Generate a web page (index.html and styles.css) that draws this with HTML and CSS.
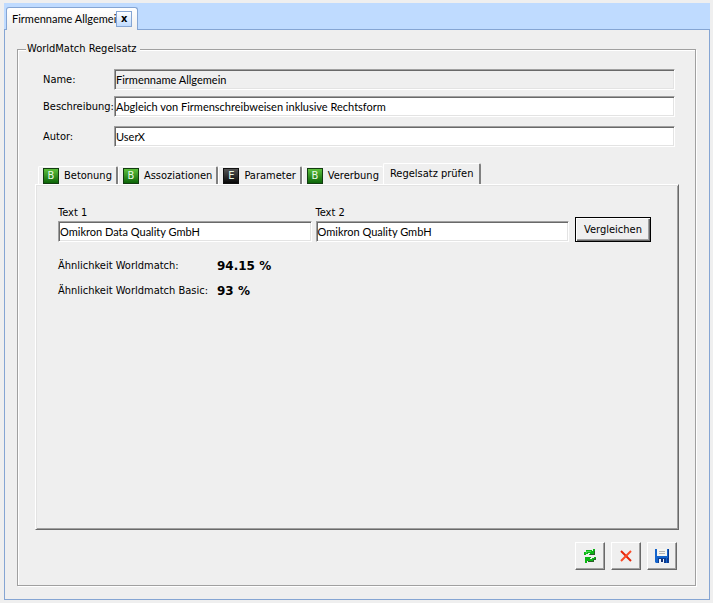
FILE: index.html
```html
<!DOCTYPE html>
<html lang="de">
<head>
    <meta charset="UTF-8">
    <meta name="viewport" content="width=device-width, initial-scale=1.0">
    <title>WorldMatch Regelsatz</title>
    <link rel="stylesheet" href="styles.css">
</head>
<body>
    <div class="window">
        <div class="editor-tabs">
            <div class="editor-tab">
                <span class="editor-title">Firmenname Allgemei</span>
                <button class="close" type="button">x</button>
            </div>
        </div>
        <form class="editor">
            <fieldset class="group">
                <legend>WorldMatch Regelsatz</legend>
                <div class="fields">
                    <label for="name">Name:</label>
                    <input class="field readonly" type="text" id="name" value="Firmenname Allgemein" readonly>
                    <label for="beschreibung">Beschreibung:</label>
                    <input class="field" type="text" id="beschreibung" value="Abgleich von Firmenschreibweisen inklusive Rechtsform">
                    <label class="spaced" for="autor">Autor:</label>
                    <input class="field spaced" type="text" id="autor" value="UserX">
                </div>

                <div class="tabs" role="tablist">
                    <button class="tab" type="button" role="tab"><span class="badge">B</span>Betonung</button>
                    <button class="tab" type="button" role="tab"><span class="badge">B</span>Assoziationen</button>
                    <button class="tab" type="button" role="tab"><span class="badge dark">E</span>Parameter</button>
                    <button class="tab last" type="button" role="tab"><span class="badge">B</span>Vererbung</button>
                    <button class="tab active" type="button" role="tab" aria-selected="true">Regelsatz prüfen</button>
                </div>
                <div class="panel" role="tabpanel">
                    <div class="compare">
                        <div class="text">
                            <label for="text1">Text 1</label>
                            <input class="field" type="text" id="text1" value="Omikron Data Quality GmbH">
                        </div>
                        <div class="text">
                            <label for="text2">Text 2</label>
                            <input class="field" type="text" id="text2" value="Omikron Quality GmbH">
                        </div>
                        <button class="compare-btn" type="button">Vergleichen</button>
                    </div>
                    <dl class="results">
                        <dt>Ähnlichkeit Worldmatch:</dt>
                        <dd>94.15 %</dd>
                        <dt>Ähnlichkeit Worldmatch Basic:</dt>
                        <dd>93 %</dd>
                    </dl>
                </div>

                <div class="actions">
                    <button class="icon-btn" type="button" aria-label="Aktualisieren">
                        <svg width="16" height="16" viewBox="0 0 16 16">
                            <path d="M2 6V4h2V2h6v1h1V1h2v6H7V6h1V5H6v1H4v1H2z" fill="#0cb414"/>
                            <path d="M3.500 5h1V3.500H9" fill="none" stroke="#4ade50"/>
                            <path d="M14 10v2h-2v2H6v-1H5v2H3V9h6v1H8v1h2v-1h2V9h2z" fill="#0cb414"/>
                            <path d="M13.500 10v1.500h-2v2H6M12.500 3v3.500H8" fill="none" stroke="#2c5a2c"/>
                        </svg>
                    </button>
                    <button class="icon-btn" type="button" aria-label="Verwerfen">
                        <svg width="16" height="16" viewBox="0 0 16 16">
                            <path d="M3 3l10 10" stroke="#e62408" stroke-width="2"/>
                            <path d="M13 3L3 13" stroke="#fa4a26" stroke-width="2"/>
                        </svg>
                    </button>
                    <button class="icon-btn" type="button" aria-label="Speichern">
                        <svg width="16" height="16" viewBox="0 0 16 16">
                            <path d="M1 1h14v14H2l-1-1z" fill="#1464cc"/>
                            <path d="M14 1h1v14h-2v-5h1z" fill="#0a3c94"/>
                            <path d="M3 1h10v7H3z" fill="#f6f6f2"/>
                            <path d="M5 3.500h6M5 5.500h6" stroke="#b4b4b4"/>
                            <path d="M4 10h8v5H4z" fill="#0c3c90"/>
                            <path d="M5 11h5v4H5z" fill="#f0f4fa"/>
                            <path d="M7 11h2v3H7z" fill="#102c70"/>
                        </svg>
                    </button>
                </div>
            </fieldset>
        </form>
    </div>
</body>
</html>
```
FILE: styles.css
```css
* {
    box-sizing: border-box;
}
body {
    margin: 0;
    padding: 3px 3px 3px 4px;
    min-height: 100vh;
    display: flex;
    background-color: #efefef;
    color: #000;
    font-family: Tahoma, "DejaVu Sans Condensed", "DejaVu Sans", sans-serif;
    font-size: 11px;
    line-height: 14px;
}
button, input {
    font: inherit;
    color: inherit;
    border-radius: 0;
    margin: 0;
}
.window {
    flex: 1;
    display: flex;
    flex-direction: column;
}
.editor-tabs {
    height: 27px;
    display: flex;
    align-items: flex-end;
    background-color: #bfdbff;
    border-bottom: 1px solid #85a5d3;
}
.editor-tab {
    display: flex;
    align-items: center;
    height: 23px;
    margin: 0 0 -1px 2px;
    padding: 0 5px;
    background: linear-gradient(#fff, #efefef);
    border: 1px solid #85a5d3;
    border-bottom: none;
    border-radius: 3px 3px 0 0;
}
.editor-title, .field {
    font-family: Tahoma, Lato, sans-serif;
}
.editor-title {
    white-space: nowrap;
}
.close {
    flex: none;
    width: 16px;
    height: 16px;
    padding: 0;
    border: 1px solid #85a5d3;
    background: linear-gradient(#fff, #bfdbff);
    font-weight: bold;
    line-height: 12px;
}
.editor {
    flex: 1;
    display: flex;
    padding: 12px 13px 13px 12px;
    border: 1px solid #85a5d3;
    border-top: none;
}
.group {
    flex: 1;
    min-width: 0;
    display: flex;
    flex-direction: column;
    margin: 0;
    padding: 13px 16px 15px 17px;
    border: 1px solid #a0a0a0;
    box-shadow: 1px 1px #fff, inset 1px 1px #fff;
}
legend {
    margin-left: -9px;
    padding: 0 3px 0 1px;
    background-color: #efefef;
}
.fields {
    display: grid;
    grid-template-columns: 71px 1fr;
    row-gap: 6px;
    align-items: center;
    padding: 0 4px 0 8px;
}
.fields label {
    white-space: nowrap;
}
.spaced {
    margin-top: 3px;
}
.field {
    min-width: 0;
    width: 100%;
    height: 21px;
    padding: 0 0 1px;
    border: 1px solid;
    border-color: #a0a0a0 #fff #fff #a0a0a0;
    box-shadow: inset 1px 1px #696969, inset -1px -1px #e3e3e3;
    background-color: #fff;
    outline: none;
    text-indent: 1px;
}
.readonly {
    background-color: #efefef;
}
.tabs {
    display: flex;
    align-items: flex-end;
    height: 22px;
    margin-top: 15px;
    padding-left: 3px;
}
.tab {
    display: flex;
    align-items: center;
    gap: 5px;
    height: 18px;
    padding: 0 4px;
    white-space: nowrap;
    background: none;
    border: 1px solid #fff;
    border-right: 2px solid #808080;
    border-bottom: none;
    border-radius: 2px 2px 0 0;
}
.tab.last {
    border-right: none;
}
.tab.active {
    height: 21px;
    padding: 0 6px;
}
.badge {
    width: 16px;
    height: 16px;
    background: linear-gradient(#5cc03c, #0c6408);
    border: 1px solid #123c10;
    color: #e8f8e4;
    line-height: 14px;
    text-align: center;
}
.badge.dark {
    background: linear-gradient(#555, #080808);
    border-color: #111;
}
.panel {
    flex: 1;
    padding: 21px 27px 0 22px;
    border: 1px solid;
    border-color: #fff #696969 #696969 #fff;
    box-shadow: inset 1px 1px #e3e3e3, inset -1px -1px #a0a0a0;
}
.compare {
    display: flex;
    align-items: flex-end;
    gap: 4px;
}
.text {
    flex: 1;
}
.text label {
    display: block;
    margin-bottom: 1px;
}
.compare-btn {
    width: 76px;
    height: 25px;
    margin-left: 2px;
    padding: 0;
    border: 1px solid #000;
    background-color: #efefef;
    box-shadow: inset 1px 1px #fff, inset -1px -1px #696969, inset -2px -2px #a0a0a0;
}
.results {
    display: grid;
    grid-template-columns: 159px 1fr;
    row-gap: 9px;
    line-height: 16px;
    margin: 16px 0 0;
}
.results dd {
    margin: 0;
    font-family: Verdana, "DejaVu Sans", sans-serif;
    font-size: 12px;
    font-weight: bold;
}
.actions {
    display: flex;
    justify-content: flex-end;
    gap: 6px;
    margin-top: 12px;
    padding-right: 2px;
}
.icon-btn {
    display: flex;
    align-items: center;
    justify-content: center;
    width: 30px;
    height: 28px;
    padding: 0;
    border: 1px solid;
    border-color: #fff #696969 #696969 #fff;
    box-shadow: inset -1px -1px #a0a0a0;
    background-color: #efefef;
}
```
